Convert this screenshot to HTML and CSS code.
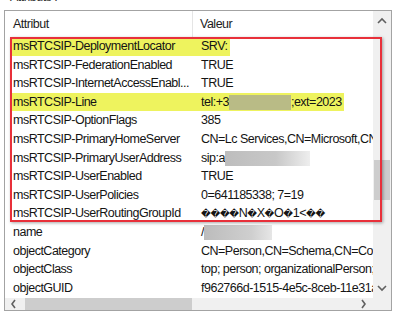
FILE: index.html
```html
<!DOCTYPE html>
<html>
<head>
<meta charset="utf-8">
<link rel="stylesheet" href="styles.css">
</head>
<body>
<div class="label">Attributs :</div>
<div class="frame">
  <div class="list">
    <div class="header">
      <div class="hcell c1">Attribut</div>
      <div class="hcell c2">Valeur</div>
    </div>
    <div class="rows">
      <div class="row hl"><div class="cell c1">msRTCSIP-DeploymentLocator</div><div class="cell c2"><span class="mark">SRV:</span></div></div>
      <div class="row"><div class="cell c1">msRTCSIP-FederationEnabled</div><div class="cell c2">TRUE</div></div>
      <div class="row"><div class="cell c1">msRTCSIP-InternetAccessEnabl...</div><div class="cell c2">TRUE</div></div>
      <div class="row hl"><div class="cell c1">msRTCSIP-Line</div><div class="cell c2"><span class="mark">tel:+3<span class="redact r-line"></span>;ext=2023</span></div></div>
      <div class="row"><div class="cell c1">msRTCSIP-OptionFlags</div><div class="cell c2">385</div></div>
      <div class="row"><div class="cell c1">msRTCSIP-PrimaryHomeServer</div><div class="cell c2">CN=Lc Services,CN=Microsoft,CN=RTC Service,CN=Services,CN=Configuration</div></div>
      <div class="row"><div class="cell c1">msRTCSIP-PrimaryUserAddress</div><div class="cell c2">sip:a<span class="redact r-sip"></span></div></div>
      <div class="row"><div class="cell c1">msRTCSIP-UserEnabled</div><div class="cell c2">TRUE</div></div>
      <div class="row"><div class="cell c1">msRTCSIP-UserPolicies</div><div class="cell c2">0=641185338; 7=19</div></div>
      <div class="row"><div class="cell c1">msRTCSIP-UserRoutingGroupId</div><div class="cell c2"><span class="bad">&#xFFFD;&#xFFFD;&#xFFFD;&#xFFFD;</span>N<span class="bad">&#xFFFD;</span>X<span class="bad">&#xFFFD;</span>O<span class="bad">&#xFFFD;</span>1&lt;<span class="bad">&#xFFFD;&#xFFFD;</span></div></div>
      <div class="row"><div class="cell c1">name</div><div class="cell c2">/<span class="redact r-name"></span></div></div>
      <div class="row"><div class="cell c1">objectCategory</div><div class="cell c2">CN=Person,CN=Schema,CN=Configuration</div></div>
      <div class="row"><div class="cell c1">objectClass</div><div class="cell c2">top; person; organizationalPerson; user</div></div>
      <div class="row"><div class="cell c1">objectGUID</div><div class="cell c2">f962766d-1515-4e5c-8ceb-11e31a2b3c4d</div></div>
    </div>
  </div>
  <div class="vscroll">
    <svg class="arrow" width="18" height="20" viewBox="0 0 18 20"><polyline points="5,12 9,8 13,12" fill="none" stroke="#606060" stroke-width="1.6"/></svg>
    <div class="vtrack"><div class="vthumb"></div></div>
    <svg class="arrow" width="18" height="20" viewBox="0 0 18 20"><polyline points="5,8 9,12 13,8" fill="none" stroke="#606060" stroke-width="1.6"/></svg>
  </div>
  <div class="hscroll">
    <svg class="arrow" width="18" height="12" viewBox="0 0 18 12"><polyline points="10,2 7,6 10,10" fill="none" stroke="#606060" stroke-width="1.6"/></svg>
    <div class="htrack"><div class="hthumb"></div></div>
    <svg class="arrow" width="18" height="12" viewBox="0 0 18 12"><polyline points="7,2 10,6 7,10" fill="none" stroke="#606060" stroke-width="1.6"/></svg>
  </div>
  <div class="corner"></div>
  <div class="redbox"></div>
</div>
</body>
</html>
```
FILE: styles.css
```css
html, body {
  margin: 0;
  padding: 0;
  background: #ffffff;
  width: 400px;
  height: 315px;
  overflow: hidden;
}
body {
  font-family: "Liberation Sans", Arial, sans-serif;
  font-size: 12.5px;
  letter-spacing: -0.5px;
  color: #141414;
}
.label {
  height: 10px;
  line-height: 10px;
  margin-top: -8px;
  padding-left: 10px;
  color: #333;
  margin-bottom: 8px;
}
.frame {
  position: relative;
  margin-left: 4px;
  width: 386px;
  height: 299px;
  border: 1px solid #a3a3a3;
  display: grid;
  grid-template-columns: 368px 18px;
  grid-template-rows: 287px 12px;
}
.list {
  overflow: hidden;
  grid-column: 1;
  grid-row: 1;
}
.header {
  display: grid;
  grid-template-columns: 188px 1fr;
  height: 26px;
}
.hcell {
  line-height: 26px;
  padding-left: 8px;
  white-space: nowrap;
  color: #1c1c1c;
}
.hcell.c1 {
  border-right: 1px solid #e5e5e5;
}
.hcell.c2 {
  padding-left: 7px;
}
.rows {
  display: flex;
  flex-direction: column;
}
.row {
  display: grid;
  grid-template-columns: 188px 180px;
  height: 18.6px;
  line-height: 18.6px;
}
.cell {
  white-space: nowrap;
  overflow: hidden;
  padding-left: 8px;
}
.row.hl .c1 {
  background: linear-gradient(to right, #ffffff 5px, #eef35e 5px);
}
.row.hl .c2 {
  padding-left: 0;
}
.mark {
  display: inline-block;
  background: #eef35e;
  padding-left: 8px;
  padding-right: 2px;
  height: 18.6px;
}
.redact {
  display: inline-block;
  vertical-align: top;
  height: 15px;
  margin-top: 2px;
}
.r-line {
  width: 62px;
  background: #b9bb86;
}
.r-sip {
  width: 85px;
  background: linear-gradient(to right, #bdbdbd, #c8c8c8 60%, #eeeeee);
}
.r-name {
  width: 68px;
  background: linear-gradient(to right, #bcbcbc, #cfcfcf 70%, #e6e6e6);
}
.bad {
  font-family: "DejaVu Sans", sans-serif;
  font-size: 9.5px;
  letter-spacing: -0.3px;
}
.vscroll {
  grid-column: 2;
  grid-row: 1;
  background: #f0f0f0;
  display: flex;
  flex-direction: column;
}
.arrow {
  display: block;
  flex: none;
}
.vtrack {
  flex: 1;
}
.vthumb {
  margin: 129px 1px 0 1px;
  height: 40px;
  background: #cdcdcd;
}
.hscroll {
  grid-column: 1;
  grid-row: 2;
  background: #f0f0f0;
  display: flex;
  align-items: center;
}
.htrack {
  flex: 1;
  height: 100%;
}
.hthumb {
  margin-left: 2px;
  width: 167px;
  height: 100%;
  background: #cdcdcd;
}
.corner {
  grid-column: 2;
  grid-row: 2;
  background: #f0f0f0;
}
.redbox {
  position: absolute;
  left: 5px;
  top: 26px;
  width: 368px;
  height: 181px;
  border: 2px solid #e8303a;
  box-shadow: 1px 1px 3px rgba(0, 0, 0, 0.35);
  pointer-events: none;
}
```
